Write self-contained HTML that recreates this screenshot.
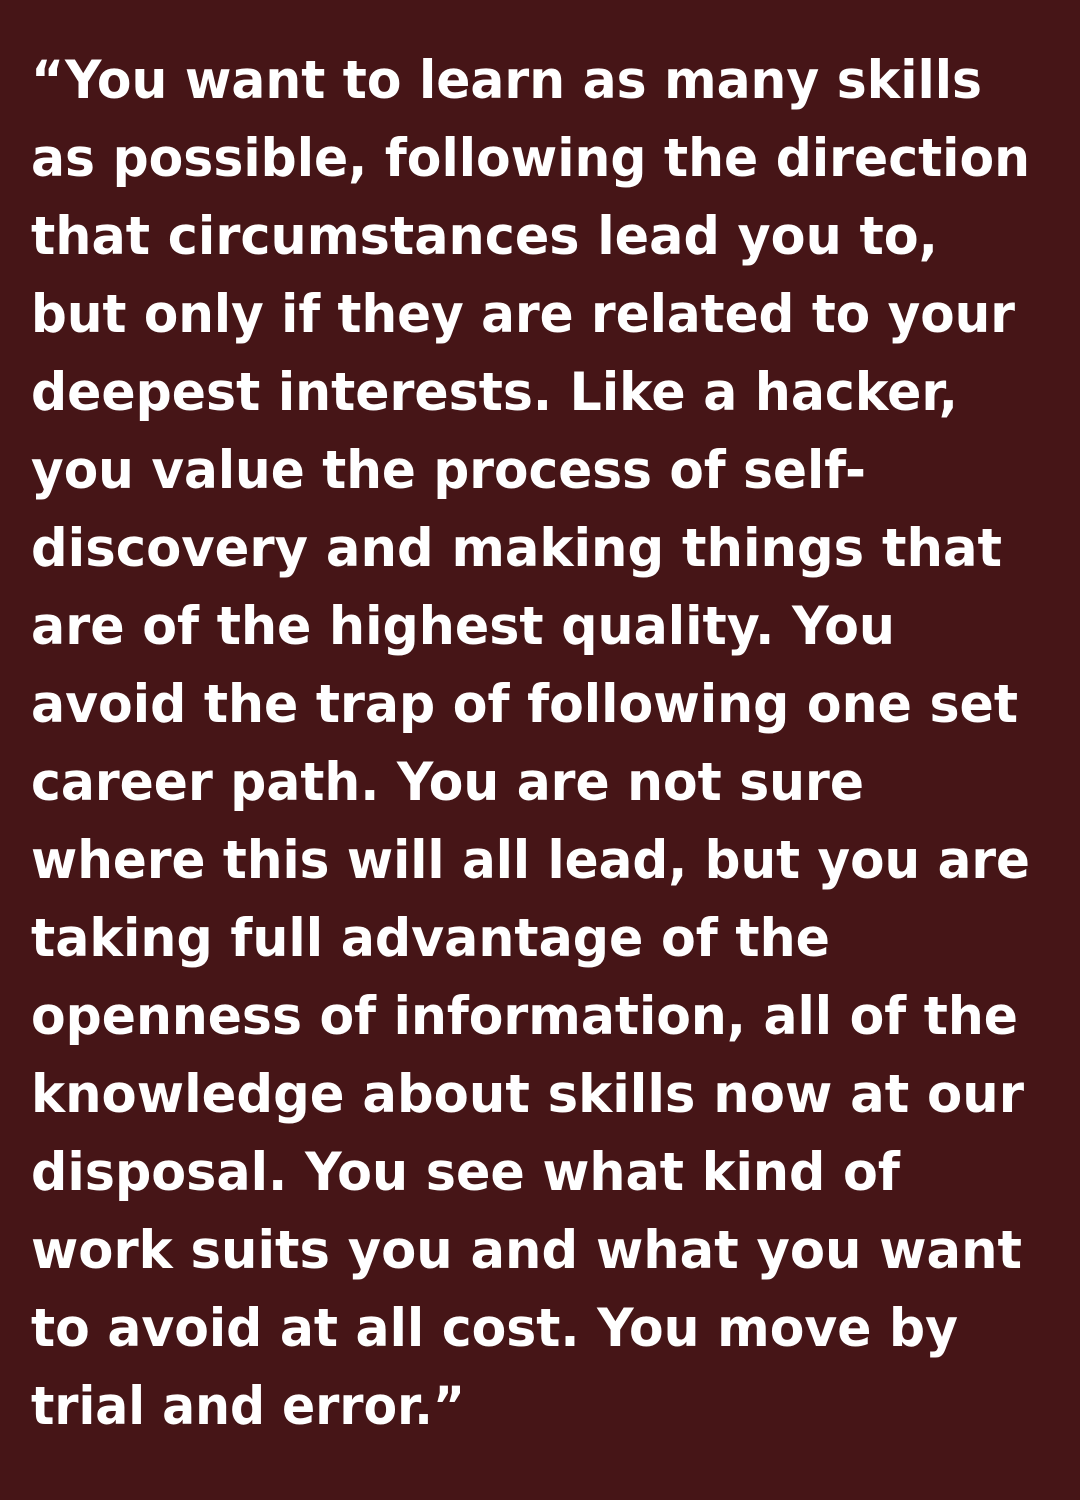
<!DOCTYPE html>
<html><head><meta charset="utf-8"><style>
html,body{margin:0;padding:0;background:#461517;}
svg{display:block}
text{font-family:"DejaVu Sans","Liberation Sans",sans-serif;font-weight:bold;font-size:53px;fill:#fff}
</style></head><body>
<svg width="1080" height="1500" viewBox="0 0 1080 1500" xmlns="http://www.w3.org/2000/svg">
<rect width="1080" height="1500" fill="#461517"/>
<text x="31" y="98" textLength="951" lengthAdjust="spacingAndGlyphs">“You want to learn as many skills</text>
<text x="31" y="176" textLength="999" lengthAdjust="spacingAndGlyphs">as possible, following the direction</text>
<text x="31" y="254" textLength="907" lengthAdjust="spacingAndGlyphs">that circumstances lead you to,</text>
<text x="31" y="332" textLength="984" lengthAdjust="spacingAndGlyphs">but only if they are related to your</text>
<text x="31" y="410" textLength="927" lengthAdjust="spacingAndGlyphs">deepest interests. Like a hacker,</text>
<text x="31" y="488" textLength="835" lengthAdjust="spacingAndGlyphs">you value the process of self-</text>
<text x="31" y="566" textLength="971" lengthAdjust="spacingAndGlyphs">discovery and making things that</text>
<text x="31" y="644" textLength="864" lengthAdjust="spacingAndGlyphs">are of the highest quality. You</text>
<text x="31" y="722" textLength="987" lengthAdjust="spacingAndGlyphs">avoid the trap of following one set</text>
<text x="31" y="800" textLength="833" lengthAdjust="spacingAndGlyphs">career path. You are not sure</text>
<text x="31" y="878" textLength="999" lengthAdjust="spacingAndGlyphs">where this will all lead, but you are</text>
<text x="31" y="956" textLength="799" lengthAdjust="spacingAndGlyphs">taking full advantage of the</text>
<text x="31" y="1034" textLength="987" lengthAdjust="spacingAndGlyphs">openness of information, all of the</text>
<text x="31" y="1112" textLength="993" lengthAdjust="spacingAndGlyphs">knowledge about skills now at our</text>
<text x="31" y="1190" textLength="869" lengthAdjust="spacingAndGlyphs">disposal. You see what kind of</text>
<text x="31" y="1268" textLength="991" lengthAdjust="spacingAndGlyphs">work suits you and what you want</text>
<text x="31" y="1346" textLength="927" lengthAdjust="spacingAndGlyphs">to avoid at all cost. You move by</text>
<text x="31" y="1424" textLength="434" lengthAdjust="spacingAndGlyphs">trial and error.”</text>
</svg>
</body></html>
